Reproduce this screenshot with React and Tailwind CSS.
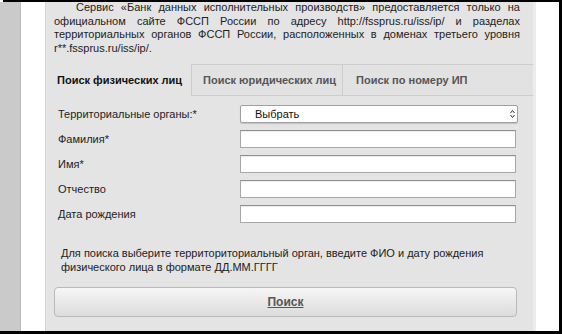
import React from "react";

const Field = ({ label, children }) => (
  <div className="flex items-center h-[18px]">
    <div className="w-[182px] text-[11px] text-[#222]">{label}</div>
    {children}
  </div>
);

const Input = () => (
  <div className="w-[276px] h-[18px] bg-white border border-[#a8a8a8] border-t-[#8e8e8e] shadow-[inset_0_1px_1px_rgba(0,0,0,0.08)]" />
);

export default function App() {
  return (
    <div
      className="w-[562px] h-[334px] overflow-hidden bg-white flex flex-col"
      style={{ fontFamily: '"Liberation Sans", Arial, sans-serif' }}
    >
      <div className="h-[2px] bg-black ml-[3px]" />
      <div className="flex-1 flex min-h-0">
        <div className="w-[21px] bg-[#cacaca] border-r border-[#bdbdbd]" />
        <div className="w-[25px] bg-white border-r border-[#d6d6d6]" />
        <div className="w-[487px] bg-[#e4e4e4] flex flex-col">
          <p className="ml-[8px] w-[466px] mt-[-1px] text-[11px] leading-[13.5px] text-[#222] text-justify indent-[22px]">
            Сервис «Банк данных исполнительных производств» предоставляется только на официальном сайте ФССП России по адресу http://fssprus.ru/iss/ip/ и разделах территориальных органов ФССП России, расположенных в доменах третьего уровня r**.fssprus.ru/iss/ip/.
          </p>
          <div className="mt-[9px] flex h-[32px] text-[11px] font-bold">
            <div className="w-[145px] pl-[11px] flex items-center text-[#111]">
              Поиск физических лиц
            </div>
            <div className="w-[151px] pl-[11px] flex items-center text-[#555] border-t border-l border-b border-[#cdcdcd] bg-[#e2e2e2]">
              Поиск юридических лиц
            </div>
            <div className="flex-1 pl-[13px] flex items-center text-[#555] border-t border-l border-b border-[#cdcdcd] bg-[#e2e2e2]">
              Поиск по номеру ИП
            </div>
          </div>
          <div className="mt-[9px] pl-[12px] flex flex-col gap-[7px]">
            <Field label="Территориальные органы:*">
              <div className="w-[278px] h-[18px] bg-white border border-[#a0a0a0] rounded-[2px] shadow-[0_1px_1px_rgba(0,0,0,0.15)] flex items-center justify-between pl-[14px] pr-[2px] text-[11px] text-[#111]">
                <span>Выбрать</span>
                <svg width="5" height="10" viewBox="0 0 5 10">
                  <path d="M0.5 4 L2.5 1.5 L4.5 4" fill="none" stroke="#333" strokeWidth="1" />
                  <path d="M0.5 6 L2.5 8.5 L4.5 6" fill="none" stroke="#333" strokeWidth="1" />
                </svg>
              </div>
            </Field>
            <Field label="Фамилия*">
              <Input />
            </Field>
            <Field label="Имя*">
              <Input />
            </Field>
            <Field label="Отчество">
              <Input />
            </Field>
            <Field label="Дата рождения">
              <Input />
            </Field>
          </div>
          <p className="mt-[23px] ml-[15px] w-[455px] text-[11px] leading-[14px] text-[#222]">
            Для поиска выберите территориториальный орган, введите ФИО и дату рождения физического лица в формате ДД.ММ.ГГГГ
          </p>
          <div className="mt-[13px] ml-[8px] w-[463px] h-[30px] rounded-[4px] border border-[#b9b9b9] bg-gradient-to-b from-[#f6f6f6] to-[#dcdcdc] flex items-center justify-center">
            <span className="text-[12px] font-bold text-[#555] underline">Поиск</span>
          </div>
        </div>
        <div className="w-[3px] bg-[#ececec]" />
        <div className="flex-1 bg-white" />
        <div className="w-[3px] bg-black" />
      </div>
      <div className="h-[3px] bg-black" />
    </div>
  );
}
